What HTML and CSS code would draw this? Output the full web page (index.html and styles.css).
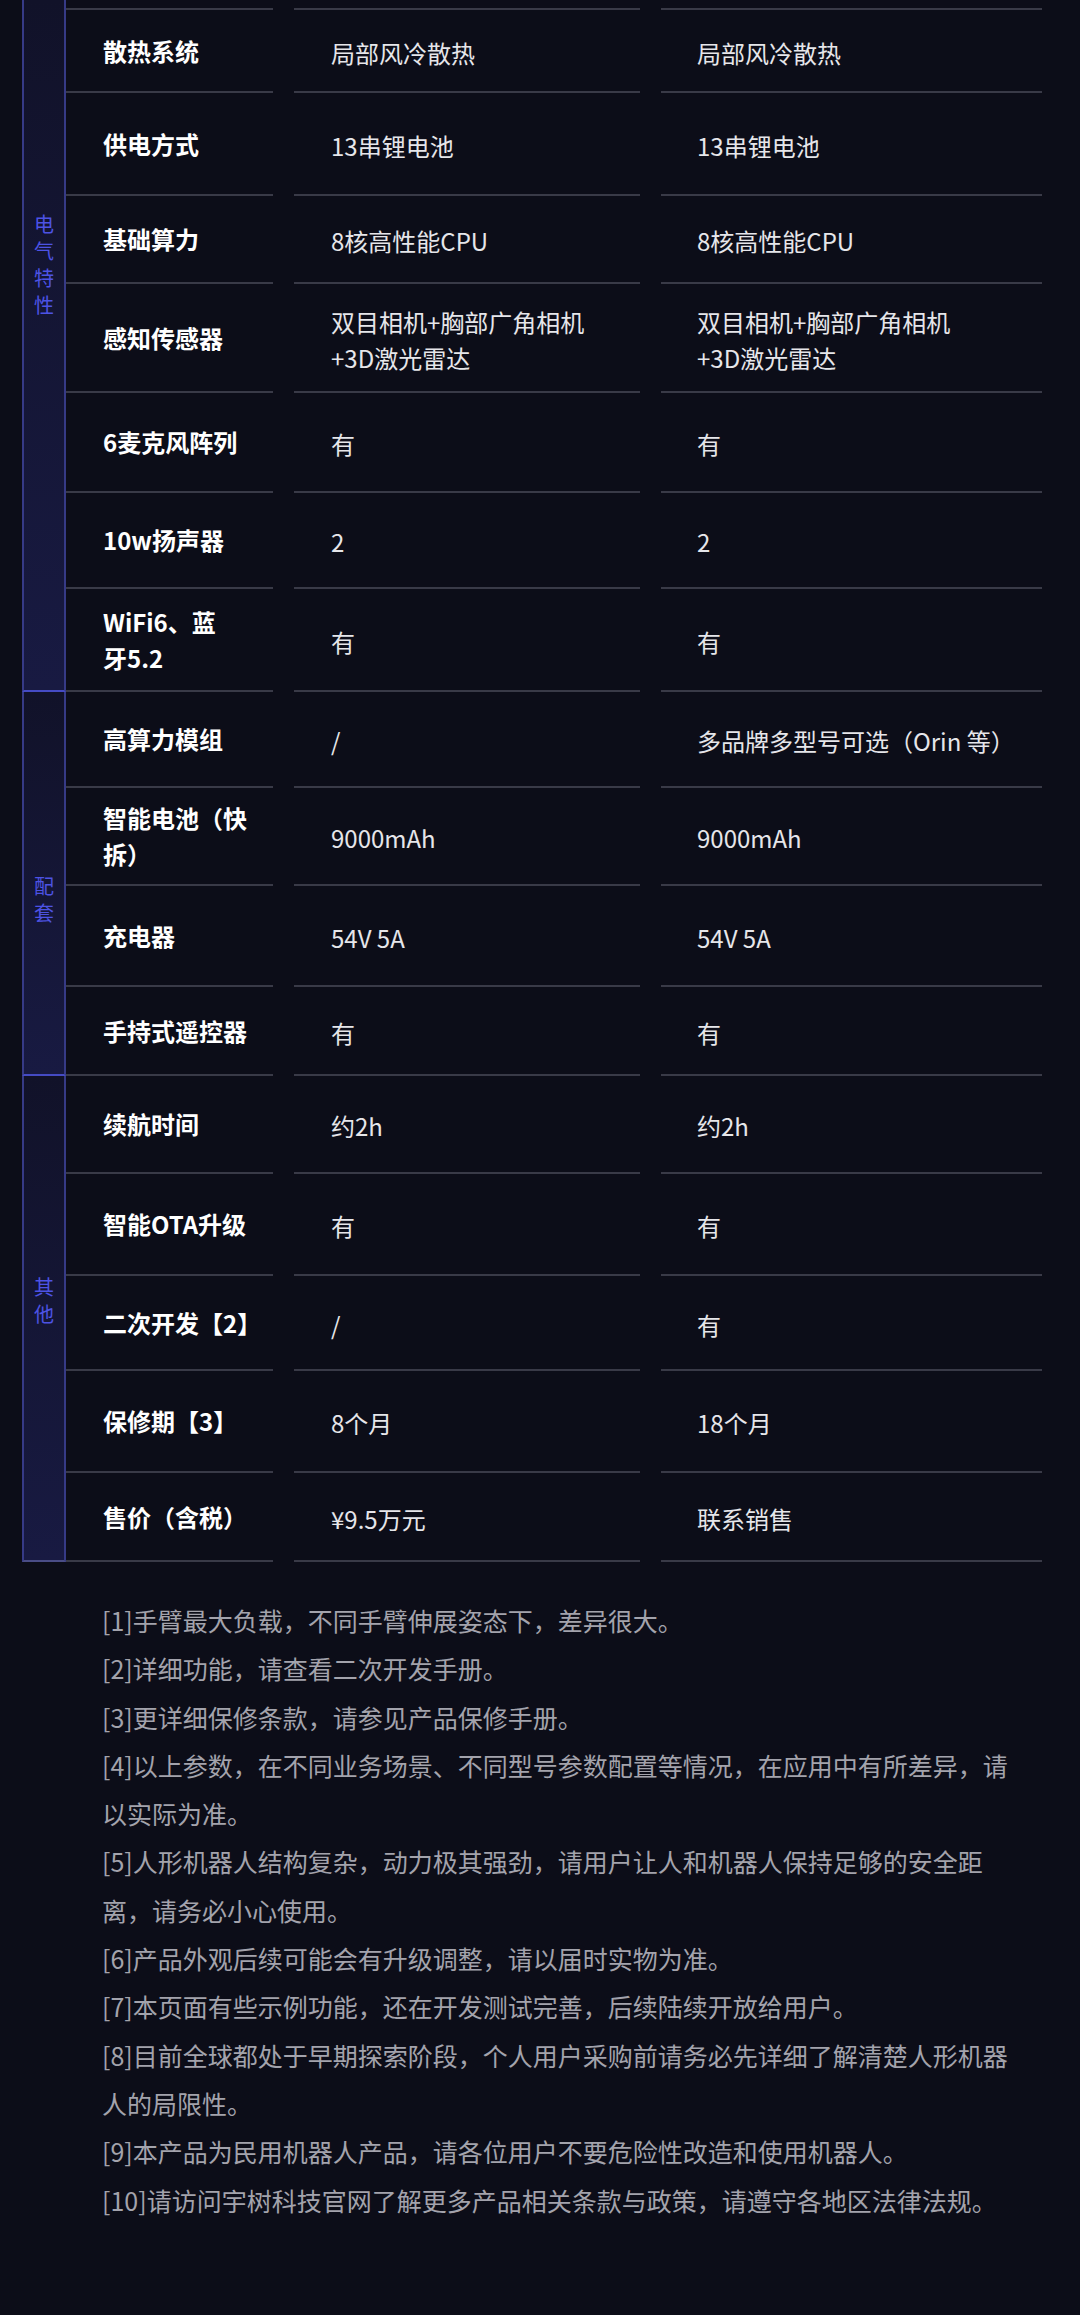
FILE: index.html
```html
<!DOCTYPE html>
<html lang="zh-CN">

<head>
  <meta charset="UTF-8" />
  <meta name="viewport" content="width=device-width, initial-scale=1.0" />
  <title>产品参数</title>
  <link rel="stylesheet" href="styles.css">
</head>

<body>
  <div class="spec">
    <!-- 电气特性 -->
    <div class="group g-elec">
      <div class="group-name">电<br>气<br>特<br>性</div>
      <div class="rows">
        <div class="row"><div class="label"></div><div class="val"></div><div class="val"></div></div>
        <div class="row"><div class="label">散热系统</div><div class="val">局部风冷散热</div><div class="val">局部风冷散热</div></div>
        <div class="row"><div class="label">供电方式</div><div class="val">13串锂电池</div><div class="val">13串锂电池</div></div>
        <div class="row"><div class="label">基础算力</div><div class="val">8核高性能CPU</div><div class="val">8核高性能CPU</div></div>
        <div class="row"><div class="label">感知传感器</div><div class="val">双目相机+胸部广角相机<br>+3D激光雷达</div><div class="val">双目相机+胸部广角相机<br>+3D激光雷达</div></div>
        <div class="row"><div class="label">6麦克风阵列</div><div class="val">有</div><div class="val">有</div></div>
        <div class="row"><div class="label">10w扬声器</div><div class="val">2</div><div class="val">2</div></div>
        <div class="row"><div class="label">WiFi6、蓝<br>牙5.2</div><div class="val">有</div><div class="val">有</div></div>
      </div>
    </div>

    <!-- 配套 -->
    <div class="group g-acc">
      <div class="group-name">配<br>套</div>
      <div class="rows">
        <div class="row"><div class="label">高算力模组</div><div class="val">/</div><div class="val">多品牌多型号可选（Orin 等）</div></div>
        <div class="row"><div class="label">智能电池（快<br>拆）</div><div class="val">9000mAh</div><div class="val">9000mAh</div></div>
        <div class="row"><div class="label">充电器</div><div class="val">54V 5A</div><div class="val">54V 5A</div></div>
        <div class="row"><div class="label">手持式遥控器</div><div class="val">有</div><div class="val">有</div></div>
      </div>
    </div>

    <!-- 其他 -->
    <div class="group g-other">
      <div class="group-name">其<br>他</div>
      <div class="rows">
        <div class="row"><div class="label">续航时间</div><div class="val">约2h</div><div class="val">约2h</div></div>
        <div class="row"><div class="label">智能OTA升级</div><div class="val">有</div><div class="val">有</div></div>
        <div class="row"><div class="label">二次开发【2】</div><div class="val">/</div><div class="val">有</div></div>
        <div class="row"><div class="label">保修期【3】</div><div class="val">8个月</div><div class="val">18个月</div></div>
        <div class="row"><div class="label">售价（含税）</div><div class="val">¥9.5万元</div><div class="val">联系销售</div></div>
      </div>
    </div>
  </div>

  <!-- 注释 -->
  <div class="notes">
    <p>[1]手臂最大负载，不同手臂伸展姿态下，差异很大。</p>
    <p>[2]详细功能，请查看二次开发手册。</p>
    <p>[3]更详细保修条款，请参见产品保修手册。</p>
    <p>[4]以上参数，在不同业务场景、不同型号参数配置等情况，在应用中有所差异，请以实际为准。</p>
    <p>[5]人形机器人结构复杂，动力极其强劲，请用户让人和机器人保持足够的安全距离，请务必小心使用。</p>
    <p>[6]产品外观后续可能会有升级调整，请以届时实物为准。</p>
    <p>[7]本页面有些示例功能，还在开发测试完善，后续陆续开放给用户。</p>
    <p>[8]目前全球都处于早期探索阶段，个人用户采购前请务必先详细了解清楚人形机器人的局限性。</p>
    <p>[9]本产品为民用机器人产品，请各位用户不要危险性改造和使用机器人。</p>
    <p>[10]请访问宇树科技官网了解更多产品相关条款与政策，请遵守各地区法律法规。</p>
  </div>
</body>

</html>
```

FILE: styles.css
```css
body {
  margin: 0;
  background: #0c0d18;
  font-family: "Noto Sans CJK SC", "Noto Sans", sans-serif;
  color: #e6e6ea;
}

/* Таблица параметров */
.spec {
  padding-left: 22px;
  width: 1020px;
}

.group {
  display: flex;
}

.group-name {
  width: 44px;
  flex-shrink: 0;
  box-sizing: border-box;
  border-left: 2px solid #363a86;
  border-right: 2px solid #363a86;
  border-bottom: 2px solid #454bc4;
  background: linear-gradient(180deg, #111229 0%, #181a42 100%);
  color: #4d53e4;
  font-size: 20px;
  line-height: 27px;
  display: flex;
  flex-direction: column;
  justify-content: center;
  align-items: center;
  text-align: center;
}

.g-elec .group-name {
  padding-bottom: 162px;
}

.g-acc .group-name {
  padding-top: 32px;
}

.g-other .group-name {
  padding-bottom: 36px;
  border-bottom-color: #4a4d86;
}

.rows {
  flex: 1;
  display: grid;
}

.g-elec .rows {
  grid-template-rows: 10px 83px 103px 88px 109px 100px 96px 103px;
}

.g-acc .rows {
  grid-template-rows: 96px 98px 101px 89px;
}

.g-other .rows {
  grid-template-rows: 98px 102px 95px 102px 89px;
}

.row {
  display: flex;
  gap: 21px;
}

.label,
.val {
  box-sizing: border-box;
  border-bottom: 2px solid #393a47;
  display: flex;
  align-items: center;
  font-size: 24px;
  line-height: 36px;
}

.label {
  width: 207px;
  padding-left: 37px;
  font-weight: bold;
  color: #ffffff;
}

.val {
  width: 346px;
  padding-left: 37px;
  padding-top: 4px;
}

.val + .val {
  width: 381px;
  padding-left: 36px;
}

/* Примечания */
.notes {
  margin-top: 34px;
  padding-left: 102px;
  width: 915px;
  color: #a3a3ac;
  font-size: 25px;
  line-height: 48.3px;
}

.notes p {
  margin: 0;
}
```
